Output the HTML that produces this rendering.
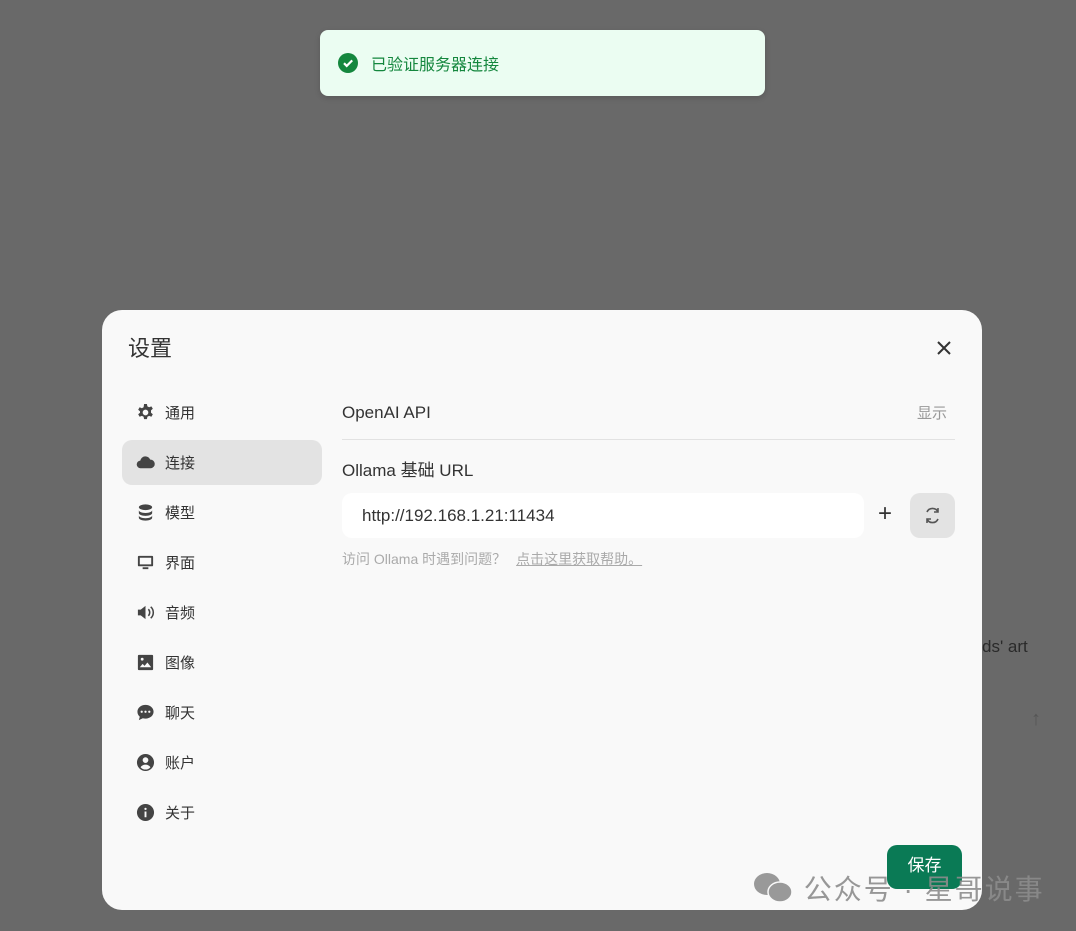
<!DOCTYPE html>
<html><head><meta charset="utf-8"><style>
*{box-sizing:border-box;margin:0;padding:0}
body{width:1076px;height:931px;background:#696969;font-family:"Liberation Sans","Noto Sans CJK SC",sans-serif;position:relative;overflow:hidden;color:#333}
.toast{position:absolute;left:320px;top:30px;width:445px;height:66px;background:#ebfdf2;border-radius:8px;box-shadow:0 2px 6px rgba(0,0,0,.15)}
.toast .ck{position:absolute;left:18px;top:23px;width:20px;height:20px;border-radius:50%;background:#14873e}
.toast span{position:absolute;left:51px;top:21px;font-size:16px;color:#14873e}
.bgtext{position:absolute;left:982px;top:637px;font-size:17px;color:#2a2a2a}
.arrow{position:absolute;left:1031px;top:708px;color:#555;font-size:20px}
.modal{position:absolute;left:102px;top:310px;width:880px;height:600px;background:#f9f9f9;border-radius:20px}
.title{position:absolute;left:26px;top:21px;font-size:22px;color:#333}
.close{position:absolute;left:834px;top:30px}
.nav{position:absolute;left:20px;top:80px;width:200px}
.item{height:45px;margin-bottom:5px;border-radius:10px;display:flex;align-items:center;padding-left:14px;font-size:15px;color:#333}
.item.act{background:#e3e3e3}
.item svg{width:19px;height:19px;margin-right:10px;fill:#444}
.r{position:absolute;left:240px;right:27px;top:80px}
.row1{display:flex;justify-content:space-between;height:50px;align-items:center;border-bottom:1px solid #e2e2e2;font-size:17px;padding-bottom:4px}
.row1 .s{font-size:15px;color:#999;margin-right:8px}
.lab{font-size:17px;margin-top:16px}
.inp{position:absolute;left:0;top:103px;width:522px;height:45px;background:#fff;border-radius:10px;font-size:17px;padding:13px 20px;color:#333}
.plus{position:absolute;left:536px;top:110px;font-size:24px;color:#333}
.ref{position:absolute;left:568px;top:103px;width:45px;height:45px;background:#e3e3e3;border-radius:10px}
.hint{position:absolute;left:0;top:159px;font-size:14px;color:#aaa}
.hint u{margin-left:10px}
.save{position:absolute;left:785px;top:535px;width:75px;height:44px;background:#0a7a55;border-radius:10px;color:#fff;font-size:17px;text-align:center;line-height:42px}
.wm{position:absolute;left:752px;top:868px;font-size:28px;color:rgba(140,140,140,.9);letter-spacing:2px}
</style></head><body>
<div class="bgtext">ds' art</div>
<div class="arrow">↑</div>
<div class="toast"><div class="ck"><svg width="20" height="20" viewBox="0 0 20 20"><path d="M6 10.2l2.7 2.7L14.2 7.4" stroke="#fff" stroke-width="2.2" fill="none"/></svg></div><span>已验证服务器连接</span></div>
<div class="modal">
<div class="title">设置</div>
<svg class="close" width="16" height="16" viewBox="0 0 16 16"><path d="M2 2L14 14M14 2L2 14" stroke="#333" stroke-width="2"/></svg>
<div class="nav">
<div class="item"><svg viewBox="0 0 20 20"><path d="M8.5 1h3l.5 2.5 1.8 1 2.4-1 1.5 2.6-1.9 1.7v2.4l1.9 1.7-1.5 2.6-2.4-1-1.8 1-.5 2.5h-3l-.5-2.5-1.800-1-2.4 1-1.5-2.6 1.9-1.7V8.8L2.3 7.1l1.5-2.6 2.4 1 1.8-1zM10 7a3 3 0 100 6 3 3 0 000-6z" fill-rule="evenodd"/></svg>通用</div>
<div class="item act"><svg viewBox="0 0 20 20"><path d="M5 16a4 4 0 01-.5-8A5.5 5.5 0 0115 7a4.5 4.5 0 01.5 9z"/></svg>连接</div>
<div class="item"><svg viewBox="0 0 20 20"><ellipse cx="10" cy="4.5" rx="7" ry="3"/><path d="M3 7.5c0 1.7 3.1 3 7 3s7-1.3 7-3v3c0 1.7-3.1 3-7 3s-7-1.3-7-3zM3 13c0 1.7 3.1 3 7 3s7-1.3 7-3v2.5c0 1.7-3.1 3-7 3s-7-1.3-7-3z"/></svg>模型</div>
<div class="item"><svg viewBox="0 0 20 20"><path d="M3 3h14a1 1 0 011 1v9a1 1 0 01-1 1H3a1 1 0 01-1-1V4a1 1 0 011-1zm1 2v7h12V5zM7 15h6v2H7z" fill-rule="evenodd"/></svg>界面</div>
<div class="item"><svg viewBox="0 0 20 20"><path d="M2 7h3l5-4v14l-5-4H2z"/><path d="M13 6.5a5 5 0 010 7M15.5 4a8 8 0 010 12" stroke="#444" stroke-width="1.6" fill="none"/></svg>音频</div>
<div class="item"><svg viewBox="0 0 20 20"><path d="M3 2h14a1 1 0 011 1v14a1 1 0 01-1 1H3a1 1 0 01-1-1V3a1 1 0 011-1zm1 13h12l-4-5-3 3.5-2-2zM6.5 5a1.5 1.5 0 100 3 1.5 1.5 0 000-3z" fill-rule="evenodd"/></svg>图像</div>
<div class="item"><svg viewBox="0 0 20 20"><path d="M10 2c4.7 0 8.5 3.2 8.5 7.2s-3.8 7.2-8.5 7.2c-1 0-2-.1-2.8-.4L3 18l1-3.5C2.5 13.2 1.5 11.3 1.5 9.2 1.5 5.2 5.3 2 10 2zM6 8a1.2 1.2 0 100 2.4A1.2 1.2 0 006 8zm4 0a1.2 1.2 0 100 2.4A1.2 1.2 0 0010 8zm4 0a1.2 1.2 0 100 2.4A1.2 1.2 0 0014 8z" fill-rule="evenodd"/></svg>聊天</div>
<div class="item"><svg viewBox="0 0 20 20"><path d="M10 1a9 9 0 110 18 9 9 0 010-18zm0 3.5a3 3 0 100 6 3 3 0 000-6zM4.8 15a6.8 6.8 0 0010.4 0c-1-1.8-3-2.8-5.2-2.8S5.8 13.2 4.8 15z" fill-rule="evenodd"/></svg>账户</div>
<div class="item"><svg viewBox="0 0 20 20"><path d="M10 1a9 9 0 110 18 9 9 0 010-18zm-1 8v6h2V9zm1-4a1.2 1.2 0 100 2.4A1.2 1.2 0 0010 5z" fill-rule="evenodd"/></svg>关于</div>
</div>
<div class="r">
<div class="row1"><span>OpenAI API</span><span class="s">显示</span></div>
<div class="lab">Ollama 基础 URL</div>
<div class="inp">http://192.168.1.21:11434</div>
<div class="plus">+</div>
<div class="ref"><svg width="45" height="45" viewBox="0 0 45 45"><path d="M28 19a6 6 0 00-11 0M17 26a6 6 0 0011 0M28 15v4h-4M17 30v-4h4" stroke="#555" stroke-width="1.6" fill="none"/></svg></div>
<div class="hint">访问 Ollama 时遇到问题？<u>点击这里获取帮助。</u></div>
</div>
<div class="save">保存</div>
</div>
<div class="wm"><svg width="42" height="34" viewBox="0 0 42 34" style="vertical-align:-6px"><ellipse cx="15" cy="13" rx="13" ry="11" fill="#999"/><ellipse cx="28" cy="21" rx="12" ry="10" fill="#999" stroke="#f9f9f9" stroke-width="1.5"/></svg> 公众号 · 星哥说事</div>
</body></html>
